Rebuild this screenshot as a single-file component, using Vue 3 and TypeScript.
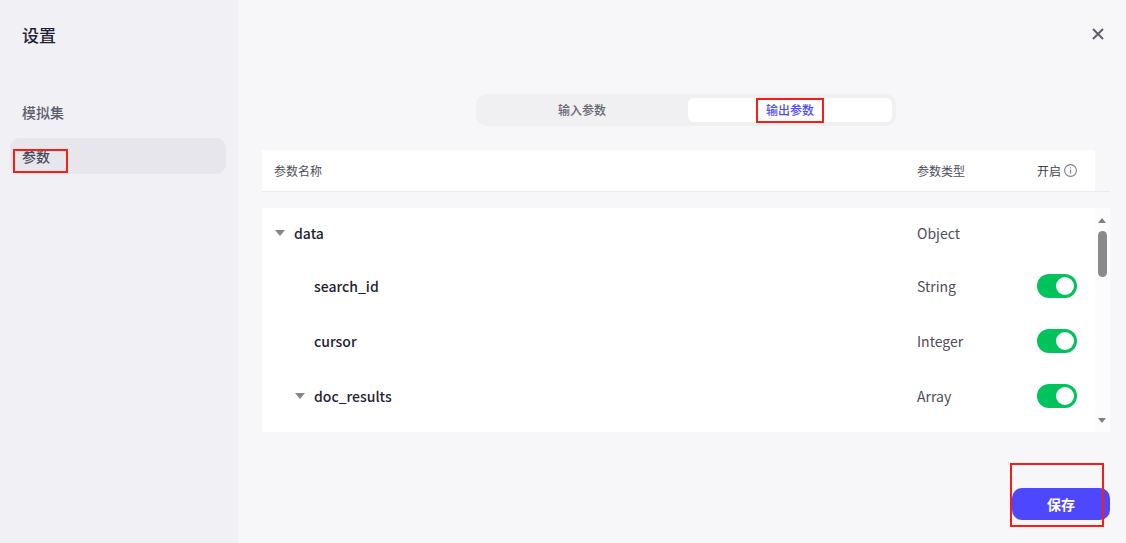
<script setup lang="ts">
interface Row { name: string; type: string; depth: number; caret: boolean; toggle: boolean }
const rows: Row[] = [
  { name: 'data', type: 'Object', depth: 0, caret: true, toggle: false },
  { name: 'search_id', type: 'String', depth: 1, caret: false, toggle: true },
  { name: 'cursor', type: 'Integer', depth: 1, caret: false, toggle: true },
  { name: 'doc_results', type: 'Array', depth: 1, caret: true, toggle: true },
]
</script>

<template>
  <div class="page">
    <aside class="side">
      <h1 class="title">设置</h1>
      <nav class="nav">
        <div class="nav-item">模拟集</div>
        <div class="nav-item active">参数</div>
      </nav>
    </aside>
    <main class="main">
      <div class="top">
        <svg class="close" width="14" height="14" viewBox="0 0 14 14"><path d="M2 2l10 10M12 2L2 12" stroke="#5e5e6e" stroke-width="2" fill="none" /></svg>
      </div>
      <div class="tabs">
        <div class="tab">输入参数</div>
        <div class="tab on">输出参数</div>
      </div>
      <div class="head-wrap">
        <div class="head">
          <span class="c-name">参数名称</span>
          <span class="c-type">参数类型</span>
          <span class="c-open">开启
            <svg width="13" height="13" viewBox="0 0 13 13"><circle cx="6.5" cy="6.5" r="5.9" fill="none" stroke="#7f7f8a" stroke-width="1.1" /><path d="M6.5 5.4v4.2M6.5 3.2v1.2" stroke="#7f7f8a" stroke-width="1.2" /></svg>
          </span>
        </div>
      </div>
      <div class="body">
        <div class="rows">
          <div v-for="r in rows" :key="r.name" class="row">
            <div class="c-name cell-name" :class="{ deep: r.depth === 1 }">
              <span v-if="r.caret" class="caret"></span>
              <span v-else class="caret-gap"></span>
              <b>{{ r.name }}</b>
            </div>
            <span class="c-type cell-type">{{ r.type }}</span>
            <span class="c-open">
              <span v-if="r.toggle" class="switch"><i></i></span>
            </span>
          </div>
        </div>
        <div class="scroll">
          <span class="arrow up"></span>
          <span class="thumb"></span>
          <span class="arrow down"></span>
        </div>
      </div>
      <div class="foot">
        <button class="save" type="button">保存</button>
      </div>
    </main>
    <span class="mark m1"></span>
    <span class="mark m2"></span>
    <span class="mark m3"></span>
  </div>
</template>

<style>
html, body { margin: 0; background: #f7f7fa; }
</style>

<style scoped>
.page {
  position: relative;
  display: flex;
  width: 1126px;
  height: 543px;
  overflow: hidden;
  font-family: "Noto Sans CJK SC", "Noto Sans", sans-serif;
  color: #1f2233;
  background: #f7f7fa;
}
.side {
  width: 238px;
  flex: none;
  box-sizing: border-box;
  background: #f0f0f5;
  padding: 22px 12px 0 10px;
}
.title {
  margin: 0 0 0 12px;
  font-size: 17px;
  line-height: 25px;
  font-weight: 500;
  color: #1f2233;
}
.nav { margin-top: 49px; display: flex; flex-direction: column; gap: 6px; }
.nav-item {
  height: 36px;
  line-height: 32px;
  padding-left: 12px;
  font-size: 14px;
  font-weight: 500;
  color: #5d5e6c;
  border-radius: 10px;
}
.nav-item.active { background: #e6e6ec; color: #4a4b5a; line-height: 36px; }
.main {
  flex: 1;
  box-sizing: border-box;
  padding: 0 16px 0 24px;
  display: flex;
  flex-direction: column;
}
.top { height: 94px; position: relative; flex: none; }
.close { position: absolute; right: 5px; top: 27px; }
.tabs {
  align-self: flex-start;
  margin-left: 214px;
  width: 420px;
  height: 32px;
  box-sizing: border-box;
  padding: 4px;
  border-radius: 10px;
  background: #f0f0f3;
  display: flex;
}
.tab {
  flex: 1;
  padding-right: 4px;
  text-align: center;
  font-size: 12px;
  font-weight: 500;
  line-height: 24px;
  color: #666672;
  border-radius: 6px;
}
.tab.on { flex: none; width: 204px; padding-right: 0; background: #fff; color: #4f4cf6; }
.head-wrap { margin-top: 24px; border-bottom: 1px solid #ebebef; height: 41px; flex: none; }
.head {
  width: 833px;
  height: 41px;
  background: #fff;
  display: flex;
  align-items: center;
  font-size: 12px;
  color: #4d4e5a;
}
.c-name { flex: 1; padding-left: 12px; min-width: 0; }
.c-type { width: 120px; flex: none; }
.c-open { width: 58px; flex: none; display: flex; align-items: center; gap: 3px; color: #3e3f4b; }
.body {
  margin-top: 16px;
  height: 224px;
  background: #fff;
  display: flex;
  flex: none;
}
.rows { width: 833px; flex: none; }
.row { height: 56px; display: flex; align-items: center; font-size: 14px; }
.row:first-child { height: 50px; }
.row:nth-child(3) { height: 54px; }
.cell-name { display: flex; align-items: center; }
.cell-name.deep { padding-left: 32px; }
.cell-name b { font-weight: 500; color: #1f2233; }
.caret {
  width: 0;
  height: 0;
  border-left: 5px solid transparent;
  border-right: 5px solid transparent;
  border-top: 6px solid #85858d;
  margin-left: 1px;
  margin-right: 9px;
}
.caret-gap { width: 20px; flex: none; }
.cell-type { color: #4d4e5a; }
.switch {
  position: relative;
  display: block;
  width: 40px;
  height: 24px;
  border-radius: 12px;
  background: #00c35c;
}
.switch i {
  position: absolute;
  right: 3px;
  top: 3px;
  width: 18px;
  height: 18px;
  border-radius: 50%;
  background: #fff;
}
.scroll {
  width: 15px;
  flex: none;
  position: relative;
  background: #fcfcfc;
}
.thumb {
  position: absolute;
  left: 3px;
  top: 23px;
  width: 9px;
  height: 46px;
  border-radius: 5px;
  background: #8a8a8a;
}
.arrow { position: absolute; left: 3px; width: 0; height: 0; border-left: 4.5px solid transparent; border-right: 4.5px solid transparent; }
.arrow.up { top: 10px; border-bottom: 5px solid #7f7f7f; }
.arrow.down { bottom: 9px; border-top: 5px solid #7f7f7f; }
.foot { margin-top: 56px; display: flex; justify-content: flex-end; }
.save {
  width: 98px;
  height: 32px;
  border: 0;
  padding: 0;
  border-radius: 10px;
  background: #4d47ff;
  color: #fff;
  font-family: inherit;
  font-size: 14px;
  font-weight: 700;
}
.mark { position: absolute; box-sizing: border-box; border: 2px solid #fb1d14; }
.m1 { left: 13px; top: 149px; width: 55px; height: 24px; }
.m2 { left: 756px; top: 98px; width: 68px; height: 25px; }
.m3 { left: 1010px; top: 463px; width: 94px; height: 64px; }
</style>
